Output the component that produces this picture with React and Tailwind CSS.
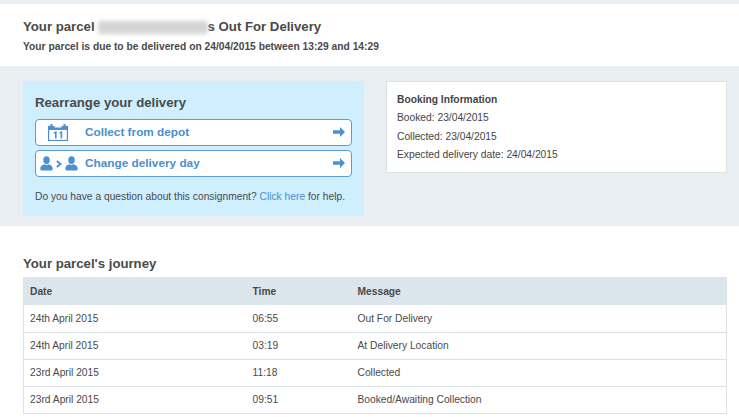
import React from "react";

const journey = [
    ["24th April 2015", "06:55", "Out For Delivery"],
    ["24th April 2015", "03:19", "At Delivery Location"],
    ["23rd April 2015", "11:18", "Collected"],
    ["23rd April 2015", "09:51", "Booked/Awaiting Collection"],
];

function CalendarIcon() {
    return (
        <svg width="20" height="17" viewBox="0 0 20 17" className="ml-[12px] text-[#4a90d2]">
            <rect x="0.6" y="2.5" width="18.8" height="14" fill="none" stroke="currentColor" strokeWidth="1.2" />
            <rect x="0.6" y="2.5" width="18.8" height="3.5" fill="currentColor" />
            <rect x="2.5" y="0" width="2" height="4" fill="currentColor" />
            <rect x="15.5" y="0" width="2" height="4" fill="currentColor" />
            <rect x="6.5" y="1.5" width="7" height="2" fill="#fff" />
            <path d="M6 9 L7.8 8.2 V14.5 M11.6 9 L13.4 8.2 V14.5" fill="none" stroke="currentColor" strokeWidth="1.6" />
        </svg>
    );
}

function PersonIcon() {
    return (
        <svg width="13" height="15" viewBox="0 0 14 17" fill="#4a90d2" className="shrink-0">
            <ellipse cx="7" cy="4.6" rx="3.7" ry="4.4" />
            <path d="M0 14.5 C0 11 2.5 10 5 9.3 L7 10.5 L9 9.3 C11.5 10 14 11 14 14.5 C14 16 13 16.5 12 16.5 H2 C1 16.5 0 16 0 14.5 Z" />
        </svg>
    );
}

function ChangeDayIcon() {
    return (
        <div className="flex items-center gap-[3px] pl-[4px]">
            <PersonIcon />
            <svg width="6" height="8" viewBox="0 0 6 8" fill="none" stroke="#4a90d2" strokeWidth="2" className="shrink-0">
                <path d="M0.8 1 L4.5 4 L0.8 7" />
            </svg>
            <PersonIcon />
        </div>
    );
}

function ArrowIcon() {
    return (
        <svg width="12" height="10" viewBox="0 0 12 10" fill="#4a90d2" className="shrink-0">
            <path d="M0 3.2 H7 V0 L12 5 L7 10 V6.8 H0 Z" />
        </svg>
    );
}

function ActionRow({ icon, label }) {
    return (
        <a className="flex h-[27px] items-center rounded-[4px] border border-[#5b9bd8] bg-white pr-[6px] text-[#4a8ed0]">
            <div className="w-[49px] shrink-0">{icon}</div>
            <span className="pt-[1px] text-[11.8px] font-bold">{label}</span>
            <div className="ml-auto -mt-[2px] flex">
                <ArrowIcon />
            </div>
        </a>
    );
}

export default function App() {
    return (
        <div className="h-[417px] overflow-hidden bg-white font-['Liberation_Sans',Arial,sans-serif] text-[#4a4a4a]">
            <div className="h-[4px] bg-[#e8eef1]" />

            {/* Heading */}
            <div className="h-[62px] px-[23px] pt-[14px]">
                <h1 className="flex h-[18px] items-center text-[13.2px] font-bold leading-[18px]">
                    <span>Your parcel</span>
                    <span className="ml-[3px] h-[13px] w-[110px] rounded-[3px] bg-[#d4d4d4] blur-[2px]" />
                    <span>s Out For Delivery</span>
                </h1>
                <p className="mt-[3px] text-[10.25px] font-bold leading-[16px]">
                    Your parcel is due to be delivered on 24/04/2015 between 13:29 and 14:29
                </p>
            </div>

            {/* Rearrange + booking */}
            <div className="flex h-[160px] items-start gap-[22px] bg-[#e8eef1] pl-[23px] pr-[12px] pt-[15px]">
                <div className="h-[135px] w-[341px] shrink-0 bg-[#cfefff] px-[12px] pt-[14px]">
                    <h2 className="text-[13.2px] font-bold leading-[16px]">Rearrange your delivery</h2>
                    <div className="mt-[8px] flex flex-col gap-[4px]">
                        <ActionRow icon={<CalendarIcon />} label="Collect from depot" />
                        <ActionRow icon={<ChangeDayIcon />} label="Change delivery day" />
                    </div>
                    <p className="mt-[12px] text-[10.25px] leading-[16px]">
                        Do you have a question about this consignment?{" "}
                        <a className="text-[#4a8ed0]">Click here</a> for help.
                    </p>
                </div>
                <div className="h-[92px] flex-1 border border-[#dde2e5] bg-white px-[10px] pt-[9px] text-[10.25px] leading-[18.4px] text-[#444]">
                    <p className="font-bold">Booking Information</p>
                    <p>Booked: 23/04/2015</p>
                    <p>Collected: 23/04/2015</p>
                    <p>Expected delivery date: 24/04/2015</p>
                </div>
            </div>

            {/* Journey */}
            <div className="pl-[23px] pr-[12px] pt-[29px]">
                <h2 className="text-[13.2px] font-bold leading-[18px]">Your parcel's journey</h2>
                <table className="mt-[4px] w-full table-fixed border-x border-b border-[#dde2e5] text-left text-[10.25px]">
                    <thead>
                        <tr className="h-[28px] bg-[#dbe5ec]">
                            <th className="w-[229px] pl-[6px] pt-[1px] font-bold">Date</th>
                            <th className="w-[105px] pt-[1px] font-bold">Time</th>
                            <th className="pt-[1px] font-bold">Message</th>
                        </tr>
                    </thead>
                    <tbody>
                        {journey.map((row, i) => (
                            <tr key={i} className="h-[27px] border-t border-[#dde2e5] first:border-t-0">
                                <td className="pl-[6px]">{row[0]}</td>
                                <td>{row[1]}</td>
                                <td>{row[2]}</td>
                            </tr>
                        ))}
                    </tbody>
                </table>
            </div>
        </div>
    );
}
